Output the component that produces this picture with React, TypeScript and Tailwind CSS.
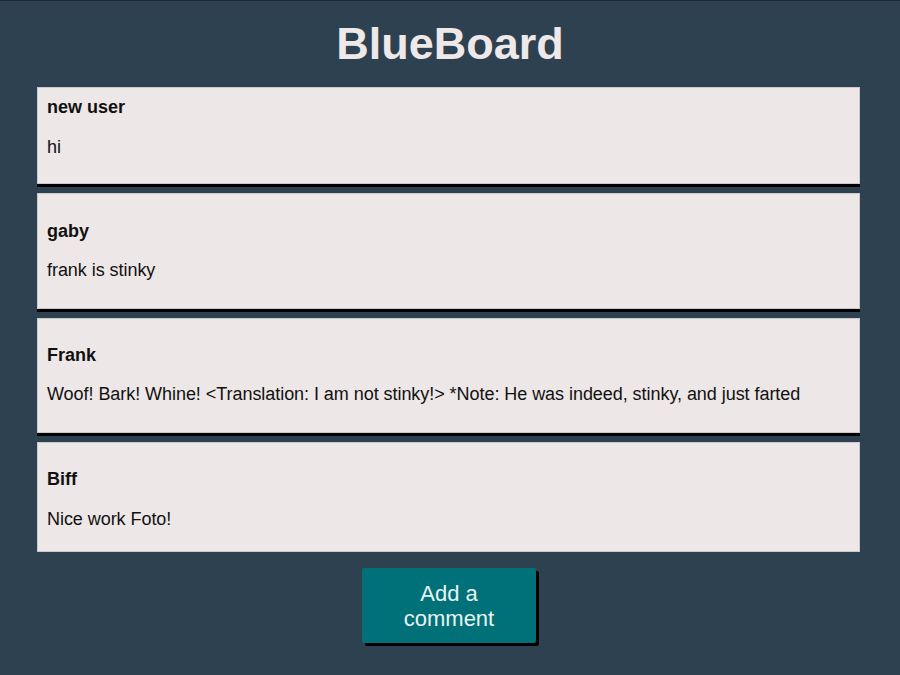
const comments = [
  { name: "new user", text: "hi", pad: "pt-[9px] pb-[25px]", gap: "mt-[19px]", shadow: true },
  { name: "gaby", text: "frank is stinky", pad: "pt-[27px] pb-[27px]", gap: "mt-[18px]", shadow: true },
  {
    name: "Frank",
    text: "Woof! Bark! Whine! <Translation: I am not stinky!> *Note: He was indeed, stinky, and just farted",
    pad: "pt-[26px] pb-[27px]",
    gap: "mt-[18px]",
    shadow: true,
  },
  { name: "Biff", text: "Nice work Foto!", pad: "pt-[26px] pb-[21px]", gap: "mt-[19px]", shadow: false },
];

export default function App() {
  return (
    <div className="min-h-[675px] bg-[#2e4151] border-t border-[#1c2833] font-['Liberation_Sans',Arial,sans-serif]">
      <h1 className="pt-[17px] text-center text-[45px] leading-[52px] font-bold text-[#efe8e8]">BlueBoard</h1>

      <div className="mt-[17px] ml-[37px] mr-[40px] flex flex-col gap-[9px]">
        {comments.map((c, i) => (
          <div
            key={i}
            className={`bg-[#ede7e7] border border-[#c9c9cf] px-[9px] ${c.pad} ${
              c.shadow ? "shadow-[0_3px_0_#000]" : ""
            }`}
          >
            <div className="text-[18px] leading-[21px] font-bold text-[#111]">{c.name}</div>
            <div className={`${c.gap} text-[18px] leading-[21px] tracking-[-0.05px] text-[#111]`}>{c.text}</div>
          </div>
        ))}
      </div>

      <div className="flex justify-center mt-[16px] pr-[2px]">
        <button className="w-[174px] h-[75px] bg-[#007178] rounded-[2px] shadow-[3px_3px_0_#000] text-[22px] leading-[25px] text-[#e8f3f3]">
          Add a
          <br />
          comment
        </button>
      </div>
    </div>
  );
}
